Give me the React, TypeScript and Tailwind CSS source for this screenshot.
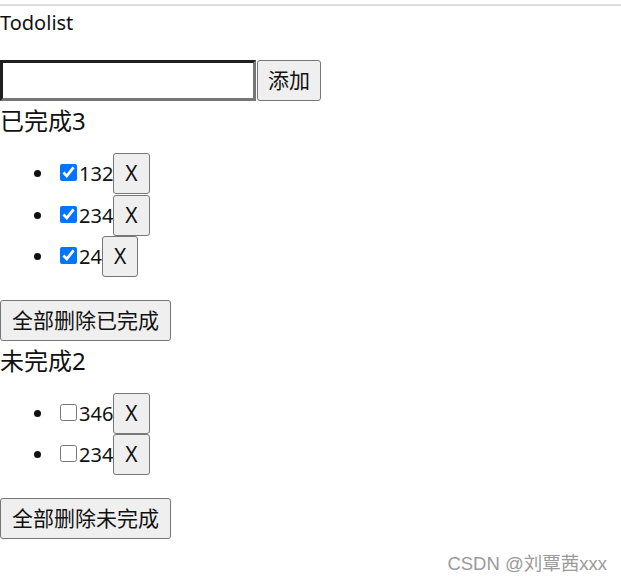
const font = { fontFamily: '"Noto Sans", "Noto Sans CJK SC", sans-serif' };

const done = ['132', '234', '24'];
const todo = ['346', '234'];

function Btn({ children }: { children: React.ReactNode }) {
  return (
    <button className="h-[41px] px-[11px] border border-[#767676] rounded-[3px] bg-[#efefef] text-[21px] text-[#111] leading-none align-baseline">
      {children}
    </button>
  );
}

function Item({ label, checked }: { label: string; checked: boolean }) {
  return (
    <li className="h-[41.5px] leading-[41px]">
      <input
        type="checkbox"
        defaultChecked={checked}
        className="w-[17px] h-[17px] ml-[5px] mr-[2px] mb-[3px] align-baseline accent-[#0075ff]"
      />
      <span>{label}</span>
      <Btn>X</Btn>
    </li>
  );
}

export default function App() {
  return (
    <div className="relative w-[621px] h-[583px] bg-white text-[20px] text-[#111] overflow-hidden" style={font}>
      <div className="mt-[4px] h-[2px] bg-[#dcdcdc]" />
      <div className="h-[27px] leading-[27px] mt-[3px]">Todolist</div>
      <div className="h-[41px] mt-[24px] flex">
        <input
          type="text"
          className="w-[256px] h-[41px] border-[3px] border-t-[#1f1f1f] border-l-[#1f1f1f] border-b-[#767676] border-r-[#767676] outline-none"
        />
        <button className="h-[41px] ml-[1px] px-[10px] border border-[#767676] rounded-[3px] bg-[#efefef] text-[21px] leading-none">
          添加
        </button>
      </div>
      <div className="text-[24px] h-[32px] leading-[32px] mt-[4px]">已完成{done.length}</div>
      <ul className="list-disc pl-[55px] mt-[16px] mb-[22px]">
        {done.map((d, i) => (
          <Item key={i} label={d} checked />
        ))}
      </ul>
      <button className="h-[41px] px-[11px] border border-[#767676] rounded-[3px] bg-[#efefef] text-[21px] leading-none block">
        全部删除已完成
      </button>
      <div className="text-[24px] h-[32px] leading-[32px] mt-[4px]">未完成{todo.length}</div>
      <ul className="list-disc pl-[55px] mt-[16px] mb-[22px]">
        {todo.map((d, i) => (
          <Item key={i} label={d} checked={false} />
        ))}
      </ul>
      <button className="h-[41px] px-[11px] border border-[#767676] rounded-[3px] bg-[#efefef] text-[21px] leading-none block">
        全部删除未完成
      </button>
      <div
        className="absolute right-[14px] bottom-[5px] text-[18.5px] text-[#9a9a9a]"
        style={{ fontFamily: '"Liberation Sans", "Noto Sans CJK SC", sans-serif' }}
      >
        CSDN @刘覃茜xxx
      </div>
    </div>
  );
}
